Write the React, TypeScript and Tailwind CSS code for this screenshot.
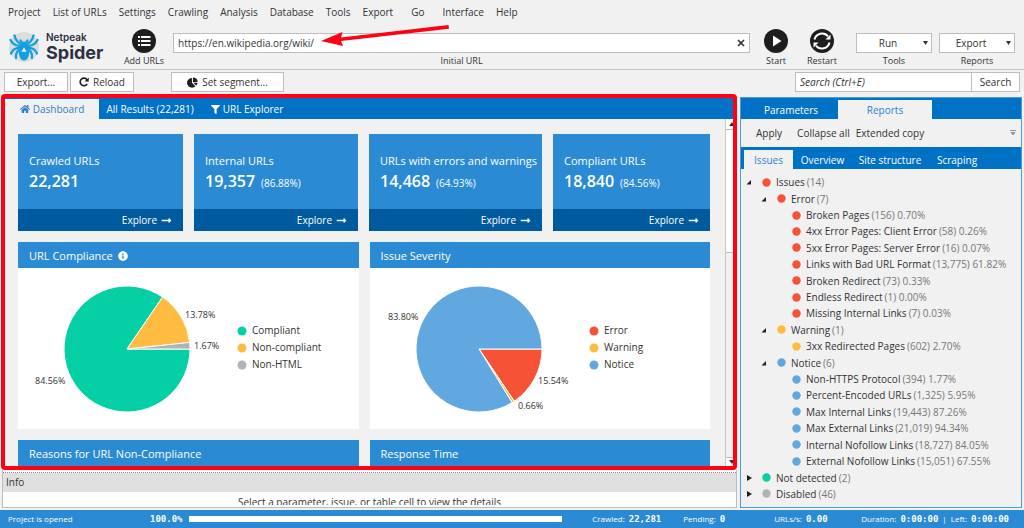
import React from "react";
import { FaHome, FaFilter, FaInfoCircle, FaLongArrowAltRight } from "react-icons/fa";

const RED = "#f65336";
const AMBER = "#ffbc40";
const BLUE = "#62a8e0";
const GREEN = "#05d0a5";
const GREY = "#b0b5b4";

function SpiderLogo() {
  return (
    <svg viewBox="0 0 32 32" className="size-8 shrink-0" aria-hidden="true">
      <circle cx="16" cy="16" r="15" fill="#dcdcdc" />
      <g fill="none" stroke="#12a0e0" strokeWidth="2.300" strokeLinejoin="round" strokeLinecap="round">
        <path d="M14 14.500 L9.500 10.500 Q7 8 6.500 4.500" />
        <path d="M18 14.500 L22.500 10.500 Q25 8 25.500 4.500" />
        <path d="M13.500 15.500 L7.500 14 Q4 12.500 2.500 9" />
        <path d="M18.500 15.500 L24.500 14 Q28 12.500 29.500 9" />
        <path d="M13.500 16.500 L8 17.500 Q4.500 18.500 3 22.500" />
        <path d="M18.500 16.500 L24 17.500 Q27.500 18.500 29 22.500" />
        <path d="M13.500 17.500 L9.500 20.500 Q7.500 23 8 27" />
        <path d="M18.500 17.500 L22.500 20.500 Q24.500 23 24 27" />
        <path d="M14 12 L12.500 9.500" />
        <path d="M18 12 L19.500 9.500" />
      </g>
      <path d="M16 10.500 C18 10.500 19.500 12 19.500 13.500 L18.800 16 C21 18.500 21.500 21.500 20.800 24.500 C20 27.500 18 29.500 16 29.500 C14 29.500 12 27.500 11.200 24.500 C10.500 21.500 11 18.500 13.200 16 L12.500 13.500 C12.500 12 14 10.500 16 10.500 Z" fill="#12a0e0" />
      <path d="M16 16.500 L18.600 20.800 H13.400 Z" fill="#e8f4fb" />
    </svg>
  );
}

function ListIcon() {
  return (
    <svg viewBox="0 0 24 24" className="size-6" aria-hidden="true">
      <circle cx="12" cy="12" r="12" fill="#1e1e1e" />
      <g fill="#fff">
        <rect x="6" y="7" width="2" height="2" />
        <rect x="9" y="7" width="9.500" height="2" />
        <rect x="6" y="11" width="2" height="2" />
        <rect x="9" y="11" width="9.500" height="2" />
        <rect x="6" y="15" width="2" height="2" />
        <rect x="9" y="15" width="9.500" height="2" />
      </g>
    </svg>
  );
}

function PlayIcon() {
  return (
    <svg viewBox="0 0 24 24" className="size-6" aria-hidden="true">
      <circle cx="12" cy="12" r="12" fill="#1e1e1e" />
      <path d="M9 6.500 V17.500 L17.500 12 Z" fill="#fff" />
    </svg>
  );
}

function RestartIcon() {
  return (
    <svg viewBox="0 0 24 24" className="size-6" aria-hidden="true">
      <circle cx="12" cy="12" r="12" fill="#1e1e1e" />
      <g fill="none" stroke="#fff" strokeWidth="2">
        <path d="M4.500 10.500 A7.700 7.700 0 0 1 18 7.300" />
        <path d="M19.500 13.500 A7.700 7.700 0 0 1 6 16.700" />
      </g>
      <path d="M20.500 5.500 V10.500 H15.500 Z" fill="#fff" />
      <path d="M3.500 18.500 V13.500 H8.500 Z" fill="#fff" />
    </svg>
  );
}

function ReloadIcon() {
  return (
    <svg viewBox="0 0 12 12" className="size-[10px]" aria-hidden="true">
      <path d="M9.800 8.200 A4.500 4.500 0 1 1 9.500 3.200" fill="none" stroke="#1e1e1e" strokeWidth="2" />
      <path d="M11.600 0.500 V5.500 H6.600 Z" fill="#1e1e1e" />
    </svg>
  );
}

function PieIcon() {
  return (
    <svg viewBox="0 0 12 12" className="size-[11px]" aria-hidden="true">
      <path d="M5.400 1 V6.300 L9.200 10 A5.300 5.300 0 1 1 5.400 1 Z" fill="#1e1e1e" />
      <path d="M6.500 0.600 A5.200 5.200 0 0 1 11.600 5.600 H6.500 Z" fill="#1e1e1e" />
      <path d="M7.200 6.500 H11.500 A5 5 0 0 1 10 9.300 Z" fill="#1e1e1e" />
    </svg>
  );
}

function IconButton({ label, children }: { label: string; children: React.ReactNode }) {
  return (
    <button className="flex w-[46px] flex-col items-center gap-[2px] text-[9px] leading-3 whitespace-nowrap">
      {children}
      {label}
    </button>
  );
}

function DropDown({ id, label, value }: { id: string; label: string; value: string }) {
  return (
    <div className="flex w-[76px] flex-col items-center gap-[2px] pt-1">
      <div className="relative w-full">
        <select
          id={id}
          className="block h-5 w-full appearance-none border border-[#bdbdbd] bg-white pr-3 text-center text-[10px] leading-4 [text-align-last:center]"
        >
          <option>{value}</option>
        </select>
        <svg viewBox="0 0 5 4" className="pointer-events-none absolute top-2 right-1 h-1 w-[5px]" aria-hidden="true">
          <path d="M0 0 H5 L2.500 4 Z" fill="#333" />
        </svg>
      </div>
      <label htmlFor={id} className="text-[9px] leading-3">
        {label}
      </label>
    </div>
  );
}

function StatCard({ title, value, share }: { title: string; value: string; share?: string }) {
  return (
    <article className="flex h-[97px] min-w-0 flex-col bg-[#2b8ad4] text-white">
      <div className="flex-1 px-[11px] pt-[19px] whitespace-nowrap">
        <h3 className="text-[11px] leading-4">{title}</h3>
        <p className="flex items-baseline gap-[6px] text-[16px] leading-6 font-semibold">
          {value}
          {share && <span className="text-[10px] font-normal">({share})</span>}
        </p>
      </div>
      <a href="#explore" className="flex h-[22px] items-center justify-end gap-1 bg-[#005a9e] px-[11px] text-[10px]">
        Explore
        <FaLongArrowAltRight className="size-[11px]" />
      </a>
    </article>
  );
}

type Slice = { name: string; share: number; color: string; lx: number; ly: number };

function PieChart({ slices, order }: { slices: Slice[]; order: string[] }) {
  const cx = 109;
  const cy = 81;
  const r = 63;
  let angle = 0;
  return (
    <svg viewBox="0 0 340 161" className="block h-[161px] w-[340px]" role="img" aria-label={order.join(", ")}>
      {slices.map((s) => {
        const start = angle;
        angle += (s.share / 100) * Math.PI * 2;
        const large = s.share > 50 ? 1 : 0;
        const d = `M${cx} ${cy} L${cx + r * Math.cos(start)} ${cy + r * Math.sin(start)} A${r} ${r} 0 ${large} 1 ${cx + r * Math.cos(angle)} ${cy + r * Math.sin(angle)} Z`;
        return <path key={s.name} d={d} fill={s.color} stroke="#fff" strokeWidth="1" strokeLinejoin="round" />;
      })}
      {slices.map((s) => (
        <text key={s.name} x={s.lx} y={s.ly} className="fill-[#333] text-[9px]">
          {s.share.toFixed(2)}%
        </text>
      ))}
      {order.map((name, i) => {
        const s = slices.find((x) => x.name === name)!;
        const y = 63 + i * 17;
        return (
          <g key={name}>
            <circle cx="224" cy={y} r="4.500" fill={s.color} />
            <text x="234" y={y + 3} className="fill-[#333] text-[10px]">
              {name}
            </text>
          </g>
        );
      })}
    </svg>
  );
}

function Panel({ title, info, children }: { title: string; info?: boolean; children?: React.ReactNode }) {
  return (
    <section className="min-w-0 overflow-hidden bg-white">
      <h2 className="flex h-[26px] items-center gap-[5px] bg-[#2b8ad4] px-[11px] pt-px text-[11px] text-white">
        {title}
        {info && <FaInfoCircle className="size-[10px]" />}
      </h2>
      {children}
    </section>
  );
}

const compliance: Slice[] = [
  { name: "Compliant", share: 84.56, color: GREEN, lx: 17, ly: 116 },
  { name: "Non-compliant", share: 13.78, color: AMBER, lx: 167, ly: 50 },
  { name: "Non-HTML", share: 1.67, color: GREY, lx: 176, ly: 81 },
];

const severity: Slice[] = [
  { name: "Error", share: 15.54, color: RED, lx: 168, ly: 116 },
  { name: "Warning", share: 0.66, color: AMBER, lx: 148, ly: 141 },
  { name: "Notice", share: 83.8, color: BLUE, lx: 18, ly: 52 },
];

type Node = { level: 0 | 1 | 2; color: string; name: string; meta: string; state?: "open" | "closed" };

const tree: Node[] = [
  { level: 0, color: RED, name: "Issues", meta: "(14)", state: "open" },
  { level: 1, color: RED, name: "Error", meta: "(7)", state: "open" },
  { level: 2, color: RED, name: "Broken Pages", meta: "(156) 0.70%" },
  { level: 2, color: RED, name: "4xx Error Pages: Client Error", meta: "(58) 0.26%" },
  { level: 2, color: RED, name: "5xx Error Pages: Server Error", meta: "(16) 0.07%" },
  { level: 2, color: RED, name: "Links with Bad URL Format", meta: "(13,775) 61.82%" },
  { level: 2, color: RED, name: "Broken Redirect", meta: "(73) 0.33%" },
  { level: 2, color: RED, name: "Endless Redirect", meta: "(1) 0.00%" },
  { level: 2, color: RED, name: "Missing Internal Links", meta: "(7) 0.03%" },
  { level: 1, color: AMBER, name: "Warning", meta: "(1)", state: "open" },
  { level: 2, color: AMBER, name: "3xx Redirected Pages", meta: "(602) 2.70%" },
  { level: 1, color: BLUE, name: "Notice", meta: "(6)", state: "open" },
  { level: 2, color: BLUE, name: "Non-HTTPS Protocol", meta: "(394) 1.77%" },
  { level: 2, color: BLUE, name: "Percent-Encoded URLs", meta: "(1,325) 5.95%" },
  { level: 2, color: BLUE, name: "Max Internal Links", meta: "(19,443) 87.26%" },
  { level: 2, color: BLUE, name: "Max External Links", meta: "(21,019) 94.34%" },
  { level: 2, color: BLUE, name: "Internal Nofollow Links", meta: "(18,727) 84.05%" },
  { level: 2, color: BLUE, name: "External Nofollow Links", meta: "(15,051) 67.55%" },
  { level: 0, color: GREEN, name: "Not detected", meta: "(2)", state: "closed" },
  { level: 0, color: GREY, name: "Disabled", meta: "(46)", state: "closed" },
];

const indent = { 0: "pl-[5px]", 1: "pl-[20px]", 2: "pl-[35px]" };

function TreeRow({ node }: { node: Node }) {
  return (
    <li className={`flex min-h-4 flex-1 items-center whitespace-nowrap ${indent[node.level]}`}>
      <svg viewBox="0 0 6 6" className="mr-[10px] size-[6px] shrink-0" aria-hidden="true">
        {node.state === "open" && <path d="M5 1 V5.500 H0.500 Z" fill="#1e1e1e" />}
        {node.state === "closed" && <path d="M1 0 L6 3 L1 6 Z" fill="#1e1e1e" />}
      </svg>
      <svg viewBox="0 0 9 9" className="mr-[5px] size-[9px] shrink-0" aria-hidden="true">
        <circle cx="4.500" cy="4.500" r="4.200" fill={node.color} />
      </svg>
      <span>{node.name}</span>
      <span className="ml-[2px] text-[#777]">{node.meta}</span>
    </li>
  );
}

const menuLeft = ["Project", "List of URLs", "Settings", "Crawling", "Analysis", "Database", "Tools", "Export"];

export default function App() {
  return (
    <div className="flex h-screen flex-col overflow-hidden bg-[#f1f1f1] font-['Open_Sans','Noto_Sans',sans-serif] text-[10px] leading-4 text-[#333]">
      <nav className="flex h-6 shrink-0 items-center gap-3 pl-2 whitespace-nowrap">
        {menuLeft.map((m) => (
          <button key={m}>{m}</button>
        ))}
        <button className="px-[6px]">Go</button>
        <button>Interface</button>
        <button>Help</button>
      </nav>

      <header className="relative flex h-[46px] shrink-0 items-start border-b border-[#c4c4c4] pt-[5px] pr-[9px] pl-2">
        <div className="flex w-[113px] items-center gap-[6px] pt-px font-['Inter',sans-serif] text-[#2d3043]">
          <SpiderLogo />
          <div>
            <div className="pt-px text-[10px] leading-3 font-semibold">Netpeak</div>
            <div className="text-[18px] leading-5 font-bold">Spider</div>
          </div>
        </div>
        <IconButton label="Add URLs">
          <ListIcon />
        </IconButton>
        <div className="ml-[6px] flex min-w-0 flex-1 flex-col items-center gap-[2px] pt-1">
          <div className="flex h-5 w-full items-center border border-[#bdbdbd] bg-white">
            <input id="initial-url" defaultValue="https://en.wikipedia.org/wiki/" className="min-w-0 flex-1 px-1 outline-none" />
            <button aria-label="Clear" className="px-1">
              <svg viewBox="0 0 8 8" className="size-2" aria-hidden="true">
                <path d="M1 1 L7 7 M7 1 L1 7" stroke="#333" strokeWidth="1.700" />
              </svg>
            </button>
          </div>
          <label htmlFor="initial-url" className="text-[9px] leading-3">
            Initial URL
          </label>
        </div>
        <div className="ml-[3px] flex">
          <IconButton label="Start">
            <PlayIcon />
          </IconButton>
          <IconButton label="Restart">
            <RestartIcon />
          </IconButton>
        </div>
        <div className="ml-[11px] flex gap-[7px]">
          <DropDown id="tools" label="Tools" value="Run" />
          <DropDown id="reports" label="Reports" value="Export" />
        </div>
        <svg viewBox="0 0 128 22" className="pointer-events-none absolute top-0 left-[321px] h-[22px] w-32" aria-hidden="true">
          <path d="M127.500 1 L128 4.700 L20 17 L22 22 L0 17 L21.500 8 L20 13.500 Z" fill="#ff0014" />
        </svg>
      </header>

      <div className="flex h-6 shrink-0 items-center gap-[2px] pr-1 pl-1">
        <button className="h-5 w-16 border border-[#bdbdbd] bg-white">Export...</button>
        <button className="flex h-5 w-16 items-center justify-center gap-1 border border-[#bdbdbd] bg-white">
          <ReloadIcon />
          Reload
        </button>
        <button className="ml-[35px] flex h-5 w-[113px] items-center justify-center gap-1 border border-[#bdbdbd] bg-white">
          <PieIcon />
          Set segment...
        </button>
        <div className="ml-auto flex">
          <input
            aria-label="Search"
            placeholder="Search (Ctrl+E)"
            className="h-5 w-[177px] border border-[#bdbdbd] bg-white px-1 italic placeholder:text-[#333]"
          />
          <button className="h-5 w-12 border border-l-0 border-[#bdbdbd] bg-white">Search</button>
        </div>
      </div>

      <main className="flex min-h-0 flex-1 gap-[3px] pr-[2px] pb-[2px] pl-[2px]">
        <div className="flex min-w-0 flex-1 flex-col">
          <div className="relative flex min-h-0 flex-1 flex-col pt-[3px] pl-[3px]">
            <div role="tablist" className="flex h-[22px] shrink-0 items-end bg-[#0072c6] text-white">
              <button role="tab" aria-selected="true" className="flex h-5 w-[94px] items-center justify-center gap-[3px] bg-[#f1f1f1] text-[#2b80cc]">
                <FaHome className="size-[10px]" />
                Dashboard
              </button>
              <button role="tab" aria-selected="false" className="h-5 w-[102px]">
                All Results (22,281)
              </button>
              <button role="tab" aria-selected="false" className="flex h-5 w-[92px] items-center justify-center gap-[3px]">
                <FaFilter className="size-[9px]" />
                URL Explorer
              </button>
            </div>
            <div className="flex min-h-0 flex-1">
              <div className="flex min-w-0 flex-1 flex-col gap-[11px] overflow-hidden pt-[15px] pr-[15px] pl-[13px]">
                <div className="grid grid-cols-[minmax(0,165fr)_minmax(0,164fr)_minmax(0,173fr)_minmax(0,157fr)] gap-[11px]">
                  <StatCard title="Crawled URLs" value="22,281" />
                  <StatCard title="Internal URLs" value="19,357" share="86.88%" />
                  <StatCard title="URLs with errors and warnings" value="14,468" share="64.93%" />
                  <StatCard title="Compliant URLs" value="18,840" share="84.56%" />
                </div>
                <div className="grid grid-cols-2 gap-[11px]">
                  <Panel title="URL Compliance" info>
                    <PieChart slices={compliance} order={["Compliant", "Non-compliant", "Non-HTML"]} />
                  </Panel>
                  <Panel title="Issue Severity">
                    <PieChart slices={severity} order={["Error", "Warning", "Notice"]} />
                  </Panel>
                  <Panel title="Reasons for URL Non-Compliance" />
                  <Panel title="Response Time" />
                </div>
              </div>
              <div className="mb-1 flex w-3 flex-col justify-between border-l border-[#c8c8c8]" aria-hidden="true">
                <div className="flex h-[134px] flex-col border-b border-[#bdbdbd] bg-white">
                  <div className="flex h-[11px] shrink-0 items-center border-b border-[#bdbdbd] pl-[3px]">
                    <svg viewBox="0 0 6 4" className="h-1 w-[6px]">
                      <path d="M0 4 L3 0 L6 4 Z" fill="#333" />
                    </svg>
                  </div>
                </div>
                <div className="flex h-[9px] items-center border-t border-[#bdbdbd] bg-white pl-[3px]">
                  <svg viewBox="0 0 6 4" className="h-1 w-[6px]">
                    <path d="M0 0 L3 4 L6 0 Z" fill="#333" />
                  </svg>
                </div>
              </div>
            </div>
            <div className="pointer-events-none absolute inset-0 -left-px rounded-[4px] border-4 border-[#ff0014]" />
          </div>
          <section className="flex h-[38px] shrink-0 flex-col border border-t-0 border-[#bdbdbd] bg-white">
            <div className="mt-[2px] border-t border-dotted border-[#888]" />
            <h2 className="h-[19px] shrink-0 bg-[#e0e0e0] px-[3px] leading-[19px]">Info</h2>
            <div className="mb-[2px] min-h-0 flex-1 overflow-hidden pt-[2px] text-center">
              Select a parameter, issue, or table cell to view the details
            </div>
          </section>
        </div>

        <aside className="mt-[3px] flex w-[282px] shrink-0 flex-col border border-[#4a9ade]">
          <div role="tablist" className="flex h-[21px] shrink-0 items-end bg-[#0072c6] text-white">
            <button role="tab" aria-selected="false" className="ml-[3px] h-[19px] w-[94px]">
              Parameters
            </button>
            <button role="tab" aria-selected="true" className="h-[19px] w-[94px] bg-[#f1f1f1] text-[#2b80cc]">
              Reports
            </button>
          </div>
          <div className="flex h-7 shrink-0 items-center pr-1 pl-[15px] whitespace-nowrap">
            <button className="mr-[15px]">Apply</button>
            <button className="mr-[6px]">Collapse all</button>
            <button>Extended copy</button>
            <svg viewBox="0 0 8 6" className="ml-auto h-[6px] w-2" aria-hidden="true">
              <path d="M1 0.500 H7 M2 2.500 H6 L4 5 Z" fill="#999" stroke="#999" />
            </svg>
          </div>
          <div role="tablist" className="flex h-[22px] shrink-0 items-end bg-[#0072c6] pl-[3px] text-white">
            <button role="tab" aria-selected="true" className="h-[19px] w-[49px] bg-[#f1f1f1] text-[#2b80cc]">
              Issues
            </button>
            <button role="tab" aria-selected="false" className="h-[19px] w-[59px]">
              Overview
            </button>
            <button role="tab" aria-selected="false" className="h-[19px] w-[76px]">
              Site structure
            </button>
            <button role="tab" aria-selected="false" className="h-[19px] w-[58px]">
              Scraping
            </button>
          </div>
          <ul className="flex min-h-0 flex-1 flex-col py-[5px]">
            {tree.map((n) => (
              <TreeRow key={n.name} node={n} />
            ))}
          </ul>
        </aside>
      </main>

      <footer className="flex h-[18px] shrink-0 items-center bg-[#2b8ad4] pr-[15px] pl-2 text-[8px] whitespace-nowrap text-white">
        <span className="w-[142px]">Project is opened</span>
        <span className="w-[39px] font-['DejaVu_Sans_Mono',monospace] text-[9px] font-bold">100.0%</span>
        <div className="h-[6px] flex-1 bg-white" />
        <StatusItem label="Crawled:" value="22,281" className="ml-[30px] w-[91px]" />
        <StatusItem label="Pending:" value="0" className="w-[91px]" />
        <StatusItem label="URLs/s:" value="0.00" className="w-[87px]" />
        <StatusItem label="Duration:" value="0:00:00" className="" />
        <span className="mx-1">|</span>
        <StatusItem label="Left:" value="0:00:00" className="" />
      </footer>
    </div>
  );
}

function StatusItem({ label, value, className }: { label: string; value: string; className: string }) {
  return (
    <span className={`flex items-center gap-1 ${className}`}>
      {label}
      <span className="font-['DejaVu_Sans_Mono',monospace] text-[9px] font-bold">{value}</span>
    </span>
  );
}
